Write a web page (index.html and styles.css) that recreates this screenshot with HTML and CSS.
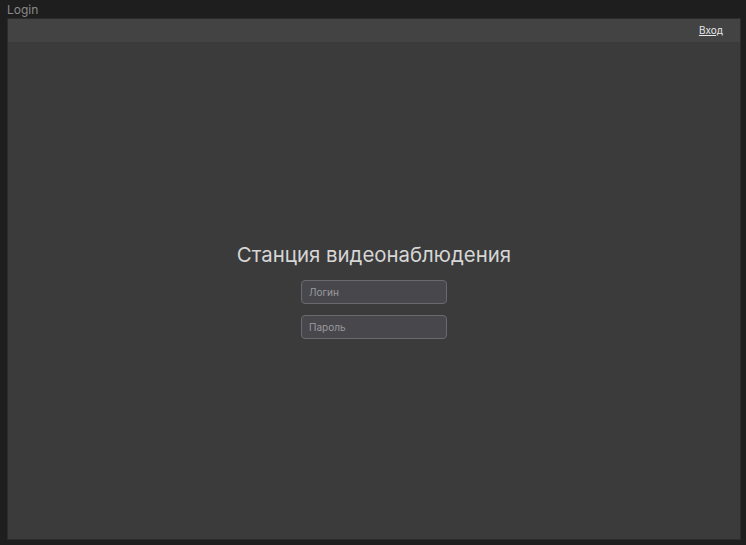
FILE: index.html
```html
<!DOCTYPE html>
<html lang="ru">
<head>
    <meta charset="UTF-8">
    <title>Login</title>
    <link rel="stylesheet" href="styles.css">
</head>
<body>
    <div class="window-title">Login</div>
    <div class="panel">
        <div class="topbar">
            <a class="login-link" href="#">Вход</a>
        </div>
        <div class="content">
            <div class="login-form">
                <h1>Станция видеонаблюдения</h1>
                <input type="text" placeholder="Логин">
                <input type="password" placeholder="Пароль">
            </div>
        </div>
    </div>
</body>
</html>
```

FILE: styles.css
```css
html, body {
    height: 100%;
}

body {
    margin: 0;
    background-color: #1e1e1e;
    font-family: 'Inter', 'Noto Sans', sans-serif;
    display: flex;
    flex-direction: column;
    padding: 0 5px 5px 7px;
    box-sizing: border-box;
}

.window-title {
    height: 18px;
    line-height: 20px;
    font-size: 12px;
    color: #8a8a8a;
}

.panel {
    flex: 1;
    display: flex;
    flex-direction: column;
    background-color: #3b3b3b;
    border: 1px solid #2c2c2c;
}

.topbar {
    height: 23px;
    background-color: #434343;
    display: flex;
    justify-content: flex-end;
    align-items: center;
    padding-right: 17px;
}

.login-link {
    color: #e6e6e6;
    font-size: 10px;
    text-decoration: underline;
    margin-bottom: 2px;
}

.content {
    flex: 1;
    display: flex;
    justify-content: center;
    align-items: center;
    padding-top: 10px;
}

.login-form {
    display: flex;
    flex-direction: column;
    align-items: center;
}

h1 {
    margin: 0 0 13px;
    font-size: 20.4px;
    font-weight: 400;
    color: #d6d6d6;
}

input {
    width: 146px;
    height: 24px;
    box-sizing: border-box;
    margin-bottom: 11px;
    padding: 0 7px;
    border-radius: 4px;
    border: 1px solid #6a6a6e;
    background-color: #48484c;
    color: #ddd;
    font-family: 'Inter', sans-serif;
    font-size: 10px;
    outline: none;
}

input::placeholder {
    color: #9a9a9e;
}
```
